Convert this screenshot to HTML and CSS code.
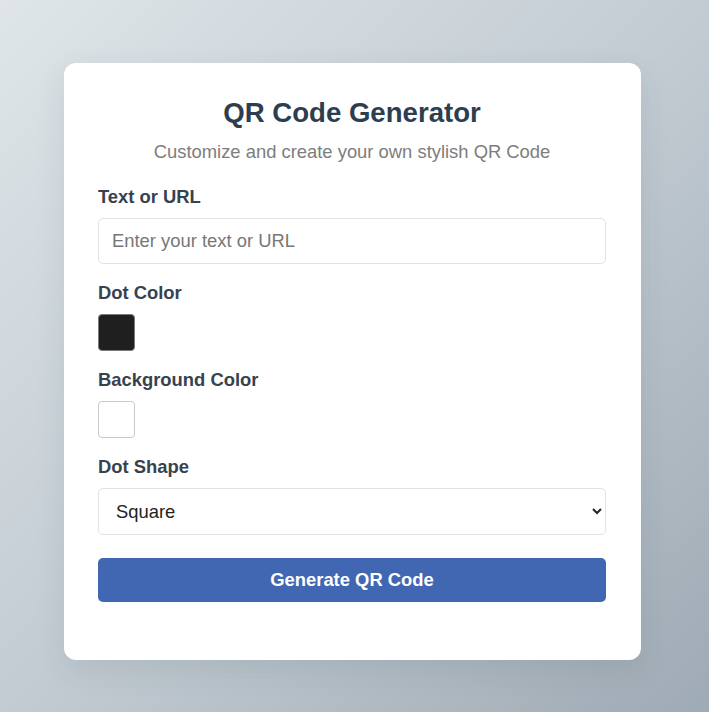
FILE: index.html
```html
<!DOCTYPE html>
<html lang="en">
<head>
<meta charset="utf-8">
<title>QR Code Generator</title>
<link rel="stylesheet" href="styles.css">
</head>
<body>
  <main class="card">
    <h1 class="title">QR Code Generator</h1>
    <p class="subtitle">Customize and create your own stylish QR Code</p>

    <div class="field first">
      <label class="label" for="text">Text or URL</label>
      <input class="text-input" id="text" type="text" placeholder="Enter your text or URL">
    </div>

    <div class="field">
      <label class="label">Dot Color</label>
      <div class="swatch swatch-dark"></div>
    </div>

    <div class="field">
      <label class="label">Background Color</label>
      <div class="swatch swatch-light"></div>
    </div>

    <div class="field">
      <label class="label" for="shape">Dot Shape</label>
      <select class="select" id="shape">
        <option>Square</option>
        <option>Dots</option>
        <option>Rounded</option>
      </select>
    </div>

    <button class="button" type="button">Generate QR Code</button>
  </main>
</body>
</html>
```

FILE: styles.css
```css
* { box-sizing: border-box; }

html, body {
  margin: 0;
  height: 100%;
}

body {
  font-family: "Liberation Sans", Arial, sans-serif;
  background: linear-gradient(135deg, #dfe5e8 0%, #c3ccd3 50%, #9eaab4 100%);
  padding: 63px 0 0 64px;
}

.card {
  width: 577px;
  background: #ffffff;
  border-radius: 12px;
  box-shadow: 0 10px 30px rgba(40, 55, 70, 0.10);
  padding: 34px 35px 58px 34px;
  display: flex;
  flex-direction: column;
}

.title {
  margin: 0;
  font-size: 27.6px;
  line-height: 31px;
  font-weight: 700;
  color: #2c3e50;
  text-align: center;
}

.subtitle {
  margin: 13px 0 0;
  font-size: 18.4px;
  line-height: 21px;
  color: #7d7d7d;
  text-align: center;
}

.field {
  display: flex;
  flex-direction: column;
  align-items: flex-start;
  margin-top: 18px;
}

.field.first { margin-top: 24px; }

.label {
  font-size: 18.4px;
  line-height: 21px;
  font-weight: 700;
  color: #36434f;
  margin-bottom: 11px;
}

.text-input {
  width: 100%;
  height: 46px;
  border: 1px solid #e3e3e3;
  border-radius: 5px;
  padding: 0 13px;
  font-family: inherit;
  font-size: 18.4px;
  color: #222;
  background: #fff;
  outline: none;
}

.text-input::placeholder { color: #777; }

.swatch {
  width: 37px;
  height: 37px;
  border-radius: 4px;
}

.swatch-dark {
  background: #1f1f1f;
  border: 1px solid #7a7a7a;
}

.swatch-light {
  background: #ffffff;
  border: 1px solid #c9c9c9;
}

.select {
  width: 100%;
  height: 47px;
  border: 1px solid #e3e3e3;
  border-radius: 5px;
  padding: 0 10px 0 13px;
  font-family: inherit;
  font-size: 18.4px;
  color: #222;
  background: #fff;
  outline: none;
}

.button {
  margin-top: 23px;
  width: 100%;
  height: 44px;
  border: none;
  border-radius: 5px;
  background: #4267b2;
  color: #ffffff;
  font-family: inherit;
  font-size: 18.4px;
  font-weight: 700;
  cursor: pointer;
}
```
